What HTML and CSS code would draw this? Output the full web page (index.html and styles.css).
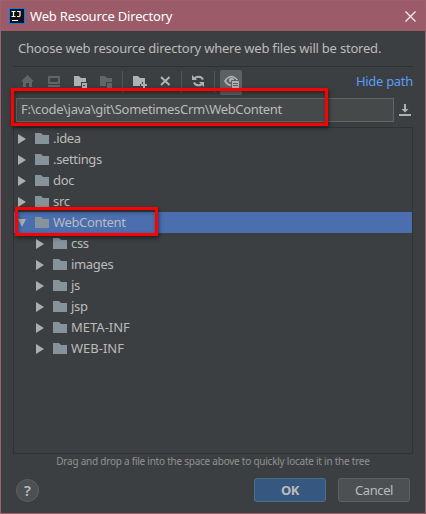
FILE: index.html
```html
<!DOCTYPE html>
<html lang="en">
<head>
<meta charset="utf-8">
<title>Web Resource Directory</title>
<link rel="stylesheet" href="styles.css">
</head>
<body>
<svg class="defs" width="0" height="0" aria-hidden="true">
  <symbol id="folder" viewBox="0 0 14 11"><path d="M0 0h6l2 2h6v9H0z"/></symbol>
  <symbol id="right" viewBox="0 0 8 10"><path d="M0 0l8 5-8 5z"/></symbol>
  <symbol id="down" viewBox="0 0 8 8"><path d="M0 0h8L4 8z"/></symbol>
</svg>
<div class="dialog">
  <header class="titlebar">
    <svg class="logo" width="16" height="16" viewBox="0 0 16 16"><path fill="#087cfa" d="M0 0h16v16H0z"/><path fill="#101010" d="M1 1h14v14H1z"/><path fill="none" stroke="#fff" stroke-width="1.2" d="M2.500 3.500h4M4.500 3.500v5M2.500 8.500h4M8 3.500h3v4q0 1-1 1H8M3 12.500h6"/></svg>
    <span class="title">Web Resource Directory</span>
    <svg class="close" width="11" height="11" viewBox="0 0 11 11"><path fill="none" stroke="#f4ecee" stroke-width="1.3" d="M.5.5l10 10M10.500.5l-10 10"/></svg>
  </header>
  <p class="message">Choose web resource directory where web files will be stored.</p>
  <main class="content">
    <div class="toolbar">
      <svg width="230" height="28" viewBox="0 0 230 28">
        <g fill="#626466"><path d="M8 14.500l6.500-6.500 6.500 6.500h-2V20h-3v-4h-3v4h-3v-5.500z"/><path fill-rule="evenodd" d="M35 9h12v8H35zm2 2v4h8v-4zM35 18h12v2H35z"/><path d="M87 9h5l2 2h5v4h-6v4h-6zM94 16h5v5h-5z"/></g>
        <g fill="#afb1b3"><path d="M61 9h5l2 2h5v4h-5v4h-7z"/><path fill-rule="evenodd" d="M69 16h5v5h-5zm1 2v1h2v-1z"/><path d="M120 9h5l2 2h5v4h-3v2h-2v2h-7zM130 15h2v2h2v2h-2v2h-2v-2h-2v-2h2z"/></g>
        <path stroke="#535658" d="M109.500 4v22M168.500 4v22M201.500 4v22"/>
        <path stroke="#afb1b3" stroke-width="2" d="M148 10l8.500 8M156.500 10l-8.500 8"/>
        <g fill="none" stroke="#afb1b3" stroke-width="2"><path d="M181 12.500a5 5 0 0 1 9 0M190 15.500a5 5 0 0 1-9 0"/></g>
        <path fill="#afb1b3" d="M179 8v5h5zM191 20v-5h-5z"/>
        <rect x="207" y="3" width="22" height="25" rx="2" fill="#5c6164"/>
        <path fill="none" stroke="#afb1b3" stroke-width="1.700" d="M218 18.500q-4-1-6-4.500 6-9 13 0"/>
        <circle cx="218.500" cy="13" r="2.500" fill="#afb1b3"/>
        <path fill="#afb1b3" stroke="#5c6164" d="M218.500 13.500h8v8h-8z"/><path stroke="#5c6164" d="M220 16.500h5M220 18.500h5"/>
      </svg>
      <a class="hide">Hide path</a>
    </div>
    <div class="pathrow">
      <div class="field"><span class="path">F:\code\java\git\SometimesCrm\WebContent</span></div>
      <svg width="12" height="12" viewBox="0 0 12 12"><path fill="#afb1b3" d="M5 0h2v5h2.500L6 8.500 2.500 5H5zM0 10h12v2H0z"/></svg>
    </div>
    <div class="tree">
      <div class="row"><svg class="arrow"><use href="#right"/></svg><svg class="folder"><use href="#folder"/></svg><span>.idea</span></div>
      <div class="row"><svg class="arrow"><use href="#right"/></svg><svg class="folder"><use href="#folder"/></svg><span>.settings</span></div>
      <div class="row"><svg class="arrow"><use href="#right"/></svg><svg class="folder"><use href="#folder"/></svg><span>doc</span></div>
      <div class="row"><svg class="arrow"><use href="#right"/></svg><svg class="folder"><use href="#folder"/></svg><span>src</span></div>
      <div class="row selected"><svg class="arrow"><use href="#down"/></svg><svg class="folder"><use href="#folder"/></svg><span>WebContent</span></div>
      <div class="row child"><svg class="arrow"><use href="#right"/></svg><svg class="folder"><use href="#folder"/></svg><span>css</span></div>
      <div class="row child"><svg class="arrow"><use href="#right"/></svg><svg class="folder"><use href="#folder"/></svg><span>images</span></div>
      <div class="row child"><svg class="arrow"><use href="#right"/></svg><svg class="folder"><use href="#folder"/></svg><span>js</span></div>
      <div class="row child"><svg class="arrow"><use href="#right"/></svg><svg class="folder"><use href="#folder"/></svg><span>jsp</span></div>
      <div class="row child"><svg class="arrow"><use href="#right"/></svg><svg class="folder"><use href="#folder"/></svg><span class="caps">META-INF</span></div>
      <div class="row child"><svg class="arrow"><use href="#right"/></svg><svg class="folder"><use href="#folder"/></svg><span class="caps">WEB-INF</span></div>
    </div>
    <p class="hint"><span>Drag and drop a file into the space above to quickly locate it in the tree</span></p>
  </main>
  <footer class="actions">
    <div class="help">?</div>
    <div class="btn primary">OK</div>
    <div class="btn">Cancel</div>
  </footer>
  <div class="mark mark-path"></div>
  <div class="mark mark-folder"></div>
</div>
</body>
</html>
```
FILE: styles.css
```css
* { box-sizing: border-box; }
body { margin: 0; background: #3c3f41; color: #bbbbbb; font: 13px/20px "Noto Sans", "Open Sans", sans-serif; }
p { margin: 0; }
svg { display: block; flex: none; }
.defs { position: absolute; }
.dialog { position: relative; width: 426px; height: 514px; display: flex; flex-direction: column; border: 1px solid #a0606d; white-space: nowrap; }
.titlebar { height: 30px; flex: none; display: flex; align-items: center; padding: 0 9px 0 8px; background: #9c5b69; color: #fff; }
.title { margin-left: 5px; flex: 1; letter-spacing: -.18px; line-height: 18px; padding-bottom: 1px; }
.message { height: 35px; line-height: 34px; padding-left: 17px; flex: none; letter-spacing: -.21px; }
.content { margin: 0 12px; }
.toolbar { height: 31px; display: flex; justify-content: space-between; border-top: 1px solid #2f3133; }
.hide { color: #589df6; line-height: 28px; letter-spacing: -.3px; }
.pathrow { display: flex; align-items: center; height: 25px; padding: 0 2px 0 3px; justify-content: space-between; }
.field { width: 378px; height: 24px; border: 1px solid #646464; background: #45494a; padding-left: 4px; line-height: 20px; letter-spacing: -.34px; }
.tree { margin-top: 5px; height: 327px; border: 1px solid #303335; letter-spacing: -.35px; }
.row { display: flex; align-items: center; height: 21px; padding-left: 4px; }
.row span { line-height: 18px; padding-bottom: 1px; }
.caps { letter-spacing: 0; }
.child { padding-left: 22px; }
.selected { background: #4b6eaf; }
.arrow { width: 8px; height: 10px; fill: #adadad; }
.folder { width: 14px; height: 11px; fill: #87939a; margin: 0 4px 0 9px; }
.hint { text-align: center; font-size: 10px; line-height: 15px; color: #919191; letter-spacing: -.24px; }
.actions { display: flex; align-items: center; margin-top: 9px; padding: 0 15px; }
.help { width: 23px; height: 23px; border: 1px solid #5e6060; border-radius: 50%; background: #4c5052; text-align: center; font-weight: 600; font-size: 15px; line-height: 21px; margin-right: auto; }
.btn { width: 72px; height: 24px; border: 1px solid #5e6060; border-radius: 3px; background: #4c5052; text-align: center; line-height: 23px; margin-left: 12px; letter-spacing: -.4px; }
.primary { background: #365880; border-color: #4c708c; font-weight: 700; }
.mark { position: absolute; border: 3px solid #f00; box-shadow: 1px 2px 4px rgba(0,0,0,.5), inset 1px 2px 4px rgba(0,0,0,.4); }
.mark-path { left: 10px; top: 87px; width: 317px; height: 38px; }
.mark-folder { left: 14px; top: 206px; width: 143px; height: 29px; }
```
